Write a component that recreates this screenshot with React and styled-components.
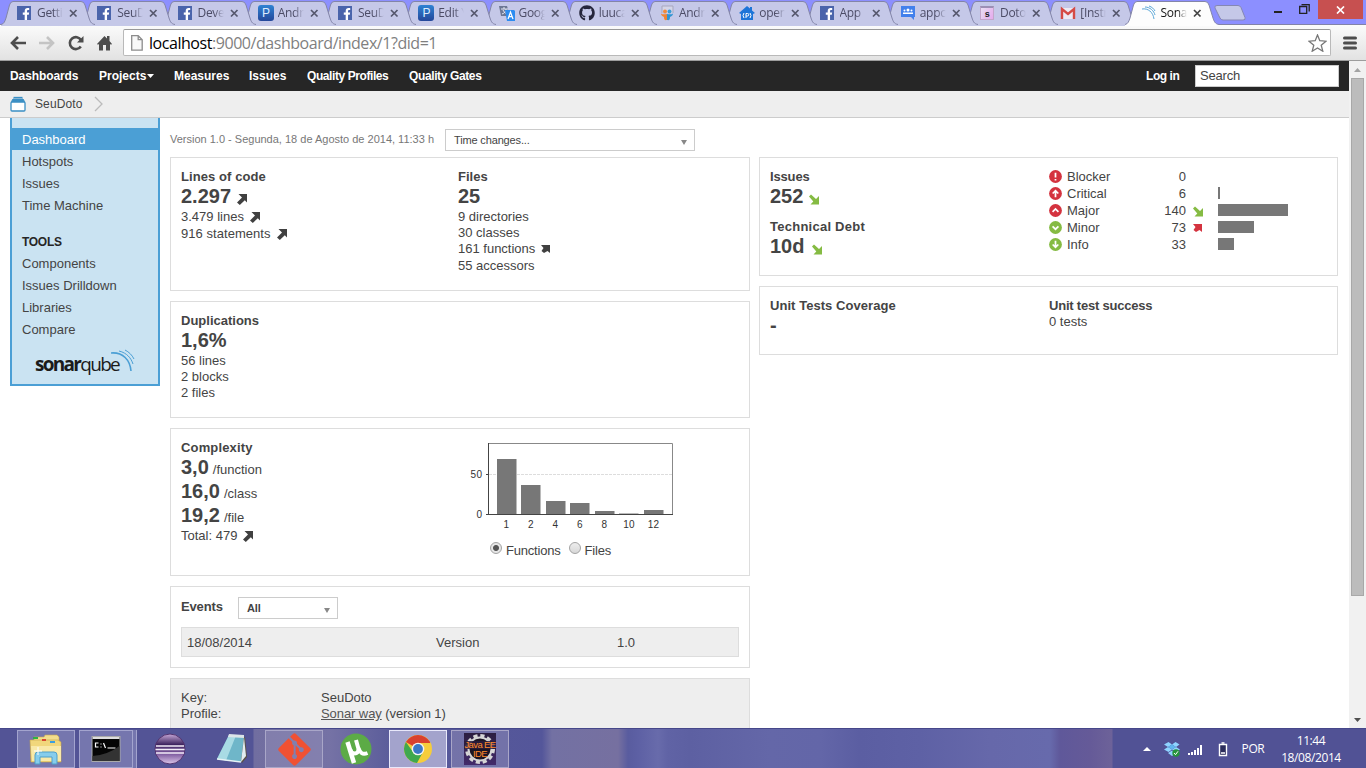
import React from "react";
import styled, { createGlobalStyle, css } from "styled-components";
import { FaFacebookF, FaGithub, FaGitAlt } from "react-icons/fa";

const Global = createGlobalStyle`
  *, *::before, *::after { box-sizing: border-box; }
  body { margin: 0; overflow: hidden; }
  body, input { font: 13px/16px "Liberation Sans", Arial, sans-serif; color: #444; }
  svg { display: block; flex: none; }
`;

const Desktop = styled.div`
  width: 1366px;
  height: 768px;
  display: flex;
  flex-direction: column;
  overflow: hidden;
  background: #fff;
`;

/* ---------- browser tabs ---------- */
const TabStrip = styled.div`
  height: 25px;
  flex: none;
  display: flex;
  background: #8c8fff;
  padding-left: 6px;
  isolation: isolate;
  border-bottom: 1px solid #8283a8;
`;
const TabItem = styled.div`
  width: 80.25px;
  height: 25px;
  flex: none;
  display: flex;
  align-items: center;
  position: relative;
  z-index: ${(p) => p.$z};
  padding: 1px 0 0 11px;
  font-family: "Open Sans", sans-serif;
  font-size: 12px;
  letter-spacing: -0.3px;
  color: ${(p) => (p.$active ? "#111" : "#4c4c66")};
`;
const TabShape = styled.svg`
  position: absolute;
  left: -5px;
  top: 0;
  z-index: -1;
`;
const TabTitle = styled.span`
  width: 27px;
  margin-left: 4px;
  overflow: hidden;
  white-space: nowrap;
  mask-image: linear-gradient(90deg, #000 60%, transparent 96%);
`;
const TabClose = styled.svg`
  margin-left: 5px;
`;
const NewTab = styled.svg`
  margin: 5px 0 0 4px;
`;
const WindowButtons = styled.div`
  margin-left: auto;
  display: flex;
  align-items: flex-start;
`;
const CloseButton = styled.div`
  width: 45px;
  height: 19px;
  margin-right: 3px;
  background: #c75050;
  display: grid;
  place-items: center;
`;

const FbIcon = styled.span`
  width: 14px;
  height: 14px;
  flex: none;
  margin-right: 2px;
  background: #4a64ab;
  color: #fff;
  display: flex;
  justify-content: flex-end;
  align-items: flex-end;
  svg { width: 10px; height: 12px; }
`;
const PIcon = styled.span`
  width: 16px;
  height: 16px;
  flex: none;
  border-radius: 3px;
  background: linear-gradient(#2f83d3, #24479a);
  color: #dcecff;
  display: grid;
  place-items: center;
  font: 12px/16px "Liberation Sans", Arial, sans-serif;
`;
const ShopIcon = styled.span`
  width: 14px;
  height: 14px;
  flex: none;
  margin-right: 2px;
  border: 1px solid #c3a6cb;
  border-top: 2px solid #9c8fb5;
  background: linear-gradient(120deg, #e9dff3, #e5a9ec);
  color: #222;
  display: grid;
  place-items: center;
  font: bold 9px/10px "Liberation Sans", Arial, sans-serif;
`;

const Favicon = ({ kind }) => {
  if (kind === "fb") return <FbIcon><FaFacebookF /></FbIcon>;
  if (kind === "p") return <PIcon>P</PIcon>;
  if (kind === "shop") return <ShopIcon>s</ShopIcon>;
  if (kind === "git") return <FaGithub size={16} color="#26263c" />;
  if (kind === "gmail")
    return (
      <svg width="16" height="16" viewBox="0 0 16 16">
        <rect x="1" y="3" width="14" height="11" fill="#eceaf3" />
        <path d="M2 14V4l6 5 6-5v10" fill="none" stroke="#d54b45" strokeWidth="2.4" />
      </svg>
    );
  if (kind === "translate")
    return (
      <svg width="16" height="16" viewBox="0 0 16 16">
        <path d="M0 1h8l3 10H2z" fill="#6d7794" />
        <path d="M2 4h7M5 2v2M3 9c3-1 4-3 4-5M4 5c1 2 2 3 4 4" stroke="#e6e9f5" fill="none" />
        <path d="M6 5h9l1 1v10H8z" fill="#2d8cf0" />
        <path d="M9 14l2.5-7 2.5 7M10 11.6h3" stroke="#fff" fill="none" strokeWidth="1.2" />
      </svg>
    );
  if (kind === "slide")
    return (
      <svg width="16" height="16" viewBox="0 0 16 16">
        <path d="M3 8V1h11v7" fill="#d4d5e8" stroke="#a7a7bd" />
        <circle cx="6" cy="6.5" r="2" fill="#f08a3c" />
        <circle cx="10.5" cy="6.5" r="2" fill="#3b9bd6" />
        <path d="M2 8.500c2 1.500 4 .500 6 .500v6c-2 .500-3 0-3-3C3 11 2 10 2 8.500z" fill="#ef8535" />
        <path d="M14 8.500c-2 1.500-4 .500-6 .500v6c2 .500 3 0 3-3 2-1 3-2 3-3.500z" fill="#2f94d2" />
      </svg>
    );
  if (kind === "open")
    return (
      <svg width="16" height="16" viewBox="0 0 16 16">
        <path d="M0 8l8-7 3 2.500V2h2v3.500L16 8l-2 1v6H2V9z" fill="#1d75d8" />
        <path d="M5 8l-1 2.500L5 13M11 8l1 2.500L11 13M7 13V8.500h1.500a1 1 0 010 2.500H7" stroke="#fff" fill="none" />
      </svg>
    );
  if (kind === "groups")
    return (
      <svg width="16" height="16" viewBox="0 0 16 16">
        <path d="M1 1h14v11h-1v3l-3-3H1z" fill="#4280ec" />
        <circle cx="8" cy="5" r="1.500" fill="#fff" />
        <circle cx="4.500" cy="5.500" r="1" fill="#fff" />
        <circle cx="11.500" cy="5.500" r="1" fill="#fff" />
        <path d="M3 9V7.500h10V9z" fill="#fff" />
      </svg>
    );
  return (
    <svg width="16" height="16" viewBox="0 0 16 16" fill="none" stroke="#5aa7d8">
      <path d="M1 4c6-1 11 3 12 10M4 2c5 0 9 4 10 8M8 1c3 1 5 3 6 5" />
    </svg>
  );
};

const tabs = [
  ["fb", "Getti"], ["fb", "SeuD"], ["fb", "Deve"], ["p", "Andr"], ["fb", "SeuD"],
  ["p", "Edit Y"], ["translate", "Goog"], ["git", "luuca"], ["slide", "Andr"],
  ["open", "open"], ["fb", "App"], ["groups", "appc"], ["shop", "Doto"],
  ["gmail", "[Instr"], ["sonar", "Sona"],
];

const Tab = ({ kind, title, active, z }) => (
  <TabItem $active={active} $z={z}>
    <TabShape width="95" height="26" viewBox="0 0 95 26">
      <path
        d="M0 24.500C3 24 4 21 5 18L8.500 5Q9.500 1.500 12 1.500H80Q83 1.500 84 5L88 18C89 21 90 24 94 24.500V26H0Z"
        fill={active ? "#fdfdfd" : "#c5c8e8"}
      />
      <path
        d="M0 24.500C3 24 4 21 5 18L8.500 5Q9.500 1.500 12 1.500H80Q83 1.500 84 5L88 18C89 21 90 24 94 24.500"
        fill="none"
        stroke="#8385a8"
      />
    </TabShape>
    <Favicon kind={kind} />
    <TabTitle>{title}</TabTitle>
    <TabClose width="9" height="9" viewBox="0 0 9 9">
      <path d="M1 1l6.500 6.500M7.500 1L1 7.500" stroke={active ? "#444" : "#55576c"} strokeWidth="1.700" />
    </TabClose>
  </TabItem>
);

/* ---------- browser toolbar ---------- */
const Toolbar = styled.div`
  height: 36px;
  flex: none;
  display: flex;
  align-items: center;
  padding: 0 9px;
  background: linear-gradient(#fbfbfb, #e2e2e2);
  border-bottom: 1px solid #9d9d9d;
`;
const AddressBar = styled.div`
  width: 1208px;
  height: 27px;
  margin: 0 12px 0 11px;
  padding: 0 3px 0 7px;
  display: flex;
  align-items: center;
  background: #fff;
  border: 1px solid #b9b9b9;
  border-top-color: #989898;
  border-radius: 2px;
`;
const Url = styled.div`
  margin: 0 auto 0 6px;
  font: 16px/22px "Open Sans", sans-serif;
  letter-spacing: -0.45px;
  color: #7f7f7f;
  b { font-weight: 400; color: #000; }
`;
const NavButtons = styled.div`
  display: flex;
  align-items: center;
  padding-left: 1px;
  gap: 13px;
`;

/* ---------- page ---------- */
const Viewport = styled.div`
  height: 667px;
  flex: none;
  display: flex;
  overflow: hidden;
`;
const Page = styled.div`
  width: 1349px;
  flex: none;
`;
const NavBar = styled.nav`
  height: 30px;
  display: flex;
  align-items: center;
  padding: 0 10px;
  background: #262626;
  color: #fff;
  font-size: 12px;
  font-weight: 700;
`;
const NavLink = styled.span`
  display: flex;
  align-items: center;
  gap: 1px;
  width: ${(p) => p.$w}px;
  letter-spacing: ${(p) => p.$ls || 0}px;
  white-space: nowrap;
`;
const SearchBox = styled.div`
  width: 144px;
  height: 22px;
  padding: 2px 4px;
  border: 1px solid #ccc;
  background: #fff;
  color: #444;
  font-size: 13px;
  font-weight: 400;
  letter-spacing: -0.2px;
`;
const Breadcrumb = styled.div`
  height: 27px;
  display: flex;
  align-items: center;
  padding-left: 10px;
  background: #eee;
  border-bottom: 1px solid #ccc;
  span { margin: 0 11px 1px 9px; width: 48px; font-size: 12px; letter-spacing: 0.1px; }
`;
const Body = styled.div`
  display: flex;
  align-items: flex-start;
  padding: 0 11px 0 10px;
`;
const Sidebar = styled.aside`
  width: 150px;
  height: 268px;
  padding-top: 10px;
  flex: none;
  background: #cae3f2;
  border: 2px solid #4b9fd5;
  border-top: 0;
`;
const SideItem = styled.div`
  height: 22px;
  padding: 0 10px;
  line-height: ${(p) => (p.$low ? 24 : 22)}px;
  ${(p) => p.$active && css`background: #4b9fd5; color: #fff;`}
`;
const SideTitle = styled.div`
  margin-top: 14px;
  height: 23px;
  padding: 0 10px;
  font: bold 12px/24px "Liberation Sans", Arial, sans-serif;
  letter-spacing: -0.3px;
  color: #262626;
`;
const Logo = styled.div`
  display: flex;
  align-items: flex-start;
  padding: 8px 0 0 23px;
  span {
    margin-top: 5px;
    font: 19px/20px "Open Sans", sans-serif;
    letter-spacing: -1.7px;
    color: #1b1b1b;
  }
  svg { margin-left: -8px; }
`;
const Main = styled.main`
  flex: 1;
  margin-left: 10px;
`;
const VersionRow = styled.div`
  height: 39px;
  padding-top: 11px;
  display: flex;
  color: #777;
  font-size: 11px;
  > span { width: 275px; line-height: 20px; white-space: nowrap; }
`;
const Select = styled.div`
  width: ${(p) => p.$w}px;
  height: 22px;
  padding: 0 7px 0 8px;
  display: flex;
  align-items: center;
  justify-content: space-between;
  border: 1px solid #ccc;
  background: #fff;
  color: #444;
  font-size: 11px;
  letter-spacing: -0.15px;
  font-weight: ${(p) => (p.$bold ? 700 : 400)};
  svg { margin-top: 4px; }
`;
const Columns = styled.div`
  display: flex;
  gap: 9px;
`;
const Column = styled.div`
  width: ${(p) => p.$w}px;
  display: flex;
  flex-direction: column;
  gap: 10px;
`;
const Card = styled.section`
  height: ${(p) => p.$h}px;
  padding: 10px;
  border: 1px solid #ddd;
  background: ${(p) => (p.$grey ? "#eee" : "#fff")};
  display: ${(p) => (p.$stack ? "block" : "flex")};
`;
const Cell = styled.div`
  width: ${(p) => p.$w}px;
  flex: none;
`;
const Title = styled.div`
  height: 16px;
  font-weight: 700;
  line-height: 18px;
  letter-spacing: ${(p) => p.$ls || 0}px;
  margin-top: ${(p) => p.$mt || 0}px;
`;
const Value = styled.div`
  height: 24px;
  display: flex;
  align-items: baseline;
  gap: ${(p) => p.$gap || 5}px;
  line-height: 24px;
  b { font-size: 20px; }
  svg { align-self: center; margin-top: 5px; }
`;
const Line = styled.div`
  height: ${(p) => (p.$tall ? 17 : 16)}px;
  padding-top: ${(p) => (p.$tall ? 0 : 2)}px;
  display: flex;
  align-items: center;
  gap: ${(p) => p.$gap || 5}px;
  letter-spacing: ${(p) => p.$ls || 0}px;
`;

const ARROWS = {
  up2: "M2.500 1H11V9.500L8.800 7.300 3.800 12 1 9.600 6 4.500z",
  up1: "M1 2h9v8L7.500 8 4 10 1.500 8 3.500 5z",
  down: "M11 3v8.500H2.500L5.300 8.600 1 3.500 3 1.500 8 6z",
};
const Arrow = ({ kind = "up2", color = "#404040" }) => (
  <svg width="12" height="12" viewBox="0 0 12 12"><path d={ARROWS[kind]} fill={color} /></svg>
);
const Caret = () => (
  <svg width="6" height="5" viewBox="0 0 6 5"><path d="M0 0h6L3 5z" fill="#888" /></svg>
);

const SeverityRow = styled.div`
  height: 17px;
  display: flex;
  align-items: center;
`;
const SeverityName = styled.span`
  width: 75px;
  margin-left: 5px;
`;
const SeverityCount = styled.span`
  width: 44px;
  text-align: right;
`;
const Trend = styled.span`
  width: 32px;
  padding-left: 6px;
`;
const Bar = styled.span`
  height: 12px;
  margin-bottom: 2px;
  background: #777;
`;
const severityGlyph = {
  Blocker: "M6 2.500v4.500M6 8.200v1.500",
  Critical: "M6 9.500V3.500M3.400 6L6 3.400 8.600 6",
  Major: "M3.300 7.200L6 4.600l2.700 2.600",
  Minor: "M3.300 5L6 7.600 8.700 5",
  Info: "M6 2.500v6M3.400 6L6 8.600 8.600 6",
};
const severities = [
  ["Blocker", "0", "#d4333f", null, 0],
  ["Critical", "6", "#d4333f", null, 2],
  ["Major", "140", "#d4333f", ["down", "#85bb43"], 70],
  ["Minor", "73", "#85bb43", ["up1", "#d4333f"], 36],
  ["Info", "33", "#85bb43", null, 16],
];

const ChartCell = styled.div`
  padding: 4px 0 0 10px;
`;
const Radios = styled.div`
  display: flex;
  align-items: flex-start;
  height: 18px;
  margin: 7px 0 0 22px;
  letter-spacing: -0.2px;
  span { margin: 1px 8px 0 4px; }
`;
const Radio = styled.i`
  width: 12px;
  height: 12px;
  flex: none;
  border: 1px solid #a3a3a3;
  border-radius: 50%;
  background: ${(p) => (p.$on ? "radial-gradient(circle, #555 0 2.5px, #e6e6e6 3.500px)" : "linear-gradient(#ededed, #d8d8d8)")};
`;
const chartBars = [[29, 55], [53, 29], [78, 13], [102, 11], [127, 3], [151, 0.5], [176, 4]];

const EventsHead = styled.div`
  display: flex;
  height: 22px;
  > b { width: 57px; line-height: 20px; letter-spacing: -0.15px; }
`;
const EventRow = styled.div`
  margin-top: 8px;
  height: 30px;
  padding: 2px 0 0 5px;
  display: flex;
  align-items: center;
  border: 1px solid #ddd;
  background: #eee;
`;
const KeyRow = styled.div`
  display: flex;
  height: 16px;
  line-height: 18px;
  > span { width: 140px; }
  > div { letter-spacing: ${(p) => p.$ls || 0}px; }
  u { color: #555; }
`;

/* ---------- scrollbar ---------- */
const Scrollbar = styled.div`
  width: 17px;
  display: flex;
  flex-direction: column;
  align-items: center;
  background: #f1f1f1;
`;
const ScrollButton = styled.div`
  width: 17px;
  height: 17px;
  display: grid;
  place-items: center;
`;
const Thumb = styled.div`
  width: 13px;
  height: 518px;
  margin-bottom: auto;
  border: 1px solid #a8a8a8;
  background: #bcbcbc;
`;

/* ---------- taskbar ---------- */
const Taskbar = styled.footer`
  height: 40px;
  flex: none;
  display: flex;
  align-items: center;
  border-top: 1px solid #46478a;
  color: #fff;
  padding-left: 17px;
  background:
    linear-gradient(90deg, #535496 0 253px, #716ea0 254px, #7572a5 330px, #575999 400px, #54569a 542px,
      #7371a3 552px, #7670a0 618px, #595c9f 628px, #5d60a4 638px, #686bab 658px, #6063a5 668px, #5d60a2 690px,
      #6467a8 770px, #6366a8 820px, #5b5ea2 860px, #5e61a5 920px, #6668aa 990px, #676aac 1050px, #5f589a 1060px,
      #655a98 1090px, #6d6299 1112px, #515295 1113px);
`;
const Task = styled.div`
  width: ${(p) => (p.$stacked ? 54 : 58)}px;
  height: 38px;
  margin-right: ${(p) => (p.$stacked ? 8 : 4)}px;
  display: grid;
  place-items: center;
  flex: none;
  border: 1px solid transparent;
  ${(p) => p.$state === "open" && css`border-color: #a3a4ce; background: #7576ae;`}
  ${(p) => p.$state === "faded" && css`border-color: #a9a6c8; background: rgba(145, 141, 184, 0.5);`}
  ${(p) => p.$state === "active" && css`border-color: #e8e8fa; background: #a3a3cc;`}
  ${(p) => p.$stacked && css`box-shadow: 3px 0 0 #7576ae, 4px 0 0 #a3a4ce;`}
`;
const Tray = styled.div`
  margin: 0 21px 0 auto;
  display: flex;
  align-items: center;
  font: 12px/17px "Open Sans", sans-serif;
`;
const TrayText = styled.div`
  width: ${(p) => p.$w}px;
  text-align: center;
  letter-spacing: -0.4px;
`;
const IdeIcon = styled.div`
  width: 32px;
  height: 32px;
  position: relative;
  background: linear-gradient(#2b1e3f, #432b6b);
  span {
    position: absolute;
    inset: 7px 0 0 0;
    width: 32px;
    text-align: center;
    font: 9.5px/9px "Liberation Sans", Arial, sans-serif;
    letter-spacing: -0.6px;
    color: #ff8a2b;
    white-space: nowrap;
  }
`;

const ExplorerIcon = () => (
  <svg width="34" height="32" viewBox="0 0 34 32">
    <path d="M5 4h10l1-2h12l2 2v6H5z" fill="#f3dd8c" stroke="#c9a850" strokeWidth=".6" />
    <path d="M1 7h28l3 2v20H2z" fill="#f1d77c" stroke="#c6a448" strokeWidth=".6" />
    <path d="M2 13h30v15H3z" fill="#f9e9a8" />
    <path d="M4 4h5v2H4z" fill="#2eb341" /><path d="M13 6h4v2h-4z" fill="#d9482f" /><path d="M21 8h5v2h-5z" fill="#3c9fe0" />
    <path d="M6 31V22q0-3 3-3h16q3 0 3 3v9h-5v-7H11v7z" fill="#86cdec" stroke="#4f9fc9" />
    <path d="M9 14v8M5 18h8" stroke="#fff" />
  </svg>
);
const ConsoleIcon = () => (
  <svg width="30" height="26" viewBox="0 0 29 26">
    <rect x=".5" y=".5" width="28" height="25" fill="#050505" stroke="#aaa" />
    <path d="M1 1h27v2H1z" fill="#ddd" />
    <path d="M7 7H4v4h3M9 8h1M9 11h1M12 7l2 5M16 12h8" fill="none" stroke="#fff" strokeWidth="1.200" />
    <path d="M1 20Q16 19 28 10V25H1z" fill="#333" />
  </svg>
);
const EclipseIcon = () => (
  <svg width="32" height="32" viewBox="0 0 32 32">
    <defs>
      <linearGradient id="ecl" x1="0" y1="0" x2="0" y2="1">
        <stop offset="0" stopColor="#c7a9d8" /><stop offset=".35" stopColor="#3f2560" /><stop offset=".65" stopColor="#7b589d" /><stop offset="1" stopColor="#dcc6e9" />
      </linearGradient>
    </defs>
    <circle cx="16" cy="16" r="15" fill="url(#ecl)" stroke="#52346f" />
    <path d="M2 13h28M1.500 16.500h29M2 20h28" stroke="#f2ecf8" strokeWidth="1.300" />
  </svg>
);
const NotepadIcon = () => (
  <svg width="32" height="32" viewBox="0 0 32 32">
    <path d="M14 3l15 1 2 20-5 6z" fill="#5a5145" />
    <path d="M13 2l15 1-3 26-24-3z" fill="#6fb6c9" />
    <path d="M13 2l7 .500-10 25L1 26z" fill="#a9dbe4" />
    <path d="M13 1l15 1v3L12 4z" fill="#dce5e8" />
    <path d="M28 4l2 19-5 6z" fill="#e2ecf0" />
    <path d="M1 26l24 3" stroke="#e6f2f5" strokeWidth="1.500" />
  </svg>
);
const TorrentIcon = () => (
  <svg width="32" height="32" viewBox="0 0 32 32">
    <circle cx="16" cy="16" r="15.500" fill="#5cab46" />
    <path d="M7.500 9l6.500 21" fill="none" stroke="#fff" strokeWidth="4.500" />
    <path d="M10 16c1.500 6 8.500 6 8.500 0L16 7M18.500 15c1.500 5 4 7 9 5" fill="none" stroke="#fff" strokeWidth="4" />
  </svg>
);
const ChromeIcon = () => (
  <svg width="30" height="30" viewBox="0 0 30 30">
    <circle cx="15" cy="15" r="14" fill="#f6cd3b" />
    <path d="M15 15L2.900 8A14 14 0 0127.100 8L27 9H15z" fill="#d9412e" />
    <path d="M2.900 8A14 14 0 0014 29l6-11-10 0z" fill="#3fa84e" />
    <circle cx="15" cy="15" r="6.300" fill="#f4f4f4" />
    <circle cx="15" cy="15" r="4.900" fill="#3b78c6" />
  </svg>
);
const DropboxTray = () => (
  <svg width="16" height="16" viewBox="0 0 16 16">
    <path d="M4.500 1L8 3.500 4 6 0 3.500zM11.500 1L15.500 3.500 12 6 8 3.500zM4 6l4 2.500L4.500 11 0 8.500zM12 6l4 2.500-4.500 2.500L8 8.500zM4 12l4-2.500L12 12l-4 3z" fill="#8ed3ff" />
    <path d="M4 6l4-2.500L12 6 8 8.500z" fill="#5fb5ee" />
    <circle cx="12" cy="12" r="3.700" fill="#26933c" />
    <path d="M10 12l1.500 1.700L14 10.300" fill="none" stroke="#fff" />
  </svg>
);

export default function App() {
  return (
    <Desktop>
      <Global />
      <TabStrip>
        {tabs.map(([kind, title], i) => (
          <Tab key={i} kind={kind} title={title} active={i === 14} z={i === 14 ? 30 : 20 - i} />
        ))}
        <NewTab width="32" height="16" viewBox="0 0 32 16">
          <path d="M3 .500h21q2 0 3 2l4 10q1 2.500-2 2.500H9q-2 0-3-2L1 3Q0 .500 3 .500z" fill="#c5c8e8" stroke="#8587b3" />
        </NewTab>
        <WindowButtons>
          <svg width="46" height="19" viewBox="0 0 46 19">
            <path d="M2 12h8" stroke="#222" strokeWidth="2" />
            <path d="M27.700 6.500h7v6.800h-7zM29.500 4.600h7.700v7" fill="none" stroke="#222" strokeWidth="1.300" />
          </svg>
          <CloseButton>
            <svg width="9" height="8" viewBox="0 0 9 8"><path d="M1 .500l7 7M8 .500l-7 7" stroke="#fff" strokeWidth="1.700" /></svg>
          </CloseButton>
        </WindowButtons>
      </TabStrip>

      <Toolbar>
        <NavButtons>
          <svg width="16" height="14" viewBox="0 0 16 14"><path d="M8 1L2 7l6 6M2 7h14" fill="none" stroke="#4d4d4d" strokeWidth="2.600" /></svg>
          <svg width="16" height="14" viewBox="0 0 16 14"><path d="M8 1l6 6-6 6M14 7H0" fill="none" stroke="#c4c4c4" strokeWidth="2.600" /></svg>
          <svg width="16" height="16" viewBox="0 0 16 16">
            <path d="M12.800 11.500A6 6 0 1113 5" fill="none" stroke="#4d4d4d" strokeWidth="2.600" />
            <path d="M15.500 1v6.500H9z" fill="#4d4d4d" />
          </svg>
          <svg width="15" height="16" viewBox="0 0 15 16">
            <path d="M0 9L7.500 1l2.500 2.500V1h2.500v5L15 9l-1 .800-1-.800v6.500H9V10H6v5.500H2V9l-1 .800z" fill="#4d4d4d" />
          </svg>
        </NavButtons>
        <AddressBar>
          <svg width="12" height="16" viewBox="0 0 12 16">
            <path d="M.700.700h6.500l4 4v10.500H.700zM7.200.700v4h4" fill="#f8f8f8" stroke="#8c8c8c" strokeWidth="1.300" />
          </svg>
          <Url><b>localhost</b>:9000/dashboard/index/1?did=1</Url>
          <svg width="19" height="18" viewBox="0 0 19 18">
            <path d="M9.500 1l2.300 5.700 6.200.500-4.800 4 1.600 6-5.300-3.300-5.300 3.300 1.600-6L1 7.200l6.200-.500z" fill="none" stroke="#777" strokeWidth="1.300" />
          </svg>
        </AddressBar>
        <svg width="14" height="14" viewBox="0 0 14 14"><path d="M1.500 2h11M1.500 7h11M1.500 12h11" stroke="#4d4d4d" strokeWidth="3" strokeLinecap="round" /></svg>
      </Toolbar>

      <Viewport>
        <Page>
          <NavBar>
            <NavLink $w={89} $ls={-0.1}>Dashboards</NavLink>
            <NavLink $w={75}>Projects<svg width="7" height="4" viewBox="0 0 7 4"><path d="M0 0h7L3.500 4z" fill="#fff" /></svg></NavLink>
            <NavLink $w={75}>Measures</NavLink>
            <NavLink $w={58}>Issues</NavLink>
            <NavLink $w={102} $ls={-0.42}>Quality Profiles</NavLink>
            <NavLink $w={737} $ls={-0.38}>Quality Gates</NavLink>
            <NavLink $w={49} $ls={-0.45}>Log in</NavLink>
            <SearchBox>Search</SearchBox>
          </NavBar>
          <Breadcrumb>
            <svg width="16" height="16" viewBox="0 0 16 16" fill="none" stroke="#3a8fc4">
              <rect x="1" y="6" width="14" height="9" rx="1" fill="#fff" strokeWidth="1.300" />
              <path d="M1.500 5.500L3 3h10l1.500 2.500z" fill="#3a8fc4" /><path d="M3.500 1.500h9" strokeWidth="1.300" />
            </svg>
            <span>SeuDoto</span>
            <svg width="9" height="16" viewBox="0 0 9 16"><path d="M1 1l7 7-7 7" fill="none" stroke="#bbb" strokeWidth="1.300" /></svg>
          </Breadcrumb>
          <Body>
            <Sidebar>
              <SideItem $low $active>Dashboard</SideItem>
              <SideItem $low>Hotspots</SideItem>
              <SideItem $low>Issues</SideItem>
              <SideItem $low>Time Machine</SideItem>
              <SideTitle>TOOLS</SideTitle>
              <SideItem>Components</SideItem>
              <SideItem>Issues Drilldown</SideItem>
              <SideItem>Libraries</SideItem>
              <SideItem>Compare</SideItem>
              <Logo>
                <span><b>sonar</b>qube</span>
                <svg width="24" height="24" viewBox="0 0 24 24" fill="none" stroke="#4b9fd5">
                  <path d="M0 4c12-1 19 7 20 18" strokeWidth="1.600" /><path d="M8 2c8 2 12 7 14 13M14 1c4 2 7 5 9 9" />
                </svg>
              </Logo>
            </Sidebar>
            <Main>
              <VersionRow>
                <span>Version 1.0 - Segunda, 18 de Agosto de 2014, 11:33 h</span>
                <Select $w={250}>Time changes...<Caret /></Select>
              </VersionRow>
              <Columns>
                <Column $w={580}>
                  <Card $h={134}>
                    <Cell $w={277}>
                      <Title $ls={0.08}>Lines of code</Title>
                      <Value><b>2.297</b><Arrow /></Value>
                      <Line $tall>3.479 lines<Arrow /></Line>
                      <Line $tall $ls={0.05}>916 statements<Arrow /></Line>
                    </Cell>
                    <Cell>
                      <Title>Files</Title>
                      <Value><b>25</b></Value>
                      <Line>9 directories</Line>
                      <Line>30 classes</Line>
                      <Line $tall>161 functions<Arrow kind="up1" /></Line>
                      <Line>55 accessors</Line>
                    </Cell>
                  </Card>
                  <Card $h={117}>
                    <Cell>
                      <Title>Duplications</Title>
                      <Value><b>1,6%</b></Value>
                      <Line>56 lines</Line>
                      <Line>2 blocks</Line>
                      <Line>2 files</Line>
                    </Cell>
                  </Card>
                  <Card $h={148}>
                    <Cell $w={277}>
                      <Title $ls={0.15}>Complexity</Title>
                      <Value $gap={4}><b>3,0</b>/function</Value>
                      <Value $gap={4}><b>16,0</b>/class</Value>
                      <Value $gap={4}><b>19,2</b>/file</Value>
                      <Line>Total: 479<Arrow /></Line>
                    </Cell>
                    <ChartCell>
                      <svg width="210" height="92" viewBox="0 0 210 92" fontFamily="Liberation Sans, Arial, sans-serif" fontSize="10" fill="#333">
                        <path d="M21 31.500h184" stroke="#ddd" strokeDasharray="3 1" />
                        <path d="M20.500.500h184v71" fill="none" stroke="#888" />
                        {chartBars.map(([x, h]) => <rect key={x} x={x} y={71 - h} width="19.500" height={h} fill="#777" />)}
                        <path d="M20.500 0v71.500H205M18 31.500h3M18 71.500h3" fill="none" stroke="#444" />
                        <text x="14.500" y="35" textAnchor="end" letterSpacing=".5">50</text>
                        <text x="14.500" y="75" textAnchor="end" letterSpacing=".5">0</text>
                        {["1", "2", "4", "6", "8", "10", "12"].map((t, i) => (
                          <text key={t} x={38.500 + i * 24.500} y="85" textAnchor="middle" letterSpacing=".3">{t}</text>
                        ))}
                      </svg>
                      <Radios>
                        <Radio $on /><span>Functions</span>
                        <Radio /><span>Files</span>
                      </Radios>
                    </ChartCell>
                  </Card>
                  <Card $h={82} $stack>
                    <EventsHead><b>Events</b><Select $w={100} $bold>All<Caret /></Select></EventsHead>
                    <EventRow>
                      <Cell $w={249}>18/08/2014</Cell>
                      <Cell $w={181}>Version</Cell>
                      <Cell>1.0</Cell>
                    </EventRow>
                  </Card>
                  <Card $h={90} $grey $stack>
                    <KeyRow><span>Key:</span>SeuDoto</KeyRow>
                    <KeyRow $ls={-0.08}><span>Profile:</span><div><u>Sonar way</u> (version 1)</div></KeyRow>
                  </Card>
                </Column>
                <Column $w={579}>
                  <Card $h={119}>
                    <Cell $w={279}>
                      <Title $ls={-0.15}>Issues</Title>
                      <Value><b>252</b><Arrow kind="down" color="#85bb43" /></Value>
                      <Title $mt={10} $ls={0.25}>Technical Debt</Title>
                      <Value $gap={7}><b>10d</b><Arrow kind="down" color="#85bb43" /></Value>
                    </Cell>
                    <Cell>
                      {severities.map(([name, count, color, trend, w]) => (
                        <SeverityRow key={name}>
                          <svg width="13" height="13" viewBox="0 0 12 12">
                            <circle cx="6" cy="6" r="5.900" fill={color} />
                            <path d={severityGlyph[name]} fill="none" stroke="#fff" strokeWidth="1.600" />
                          </svg>
                          <SeverityName>{name}</SeverityName>
                          <SeverityCount>{count}</SeverityCount>
                          <Trend>{trend && <Arrow kind={trend[0]} color={trend[1]} />}</Trend>
                          <Bar style={{ width: w }} />
                        </SeverityRow>
                      ))}
                    </Cell>
                  </Card>
                  <Card $h={69}>
                    <Cell $w={279}>
                      <Title $ls={0.05}>Unit Tests Coverage</Title>
                      <Value><b>-</b></Value>
                    </Cell>
                    <Cell>
                      <Title $ls={-0.22}>Unit test success</Title>
                      <Line>0 tests</Line>
                    </Cell>
                  </Card>
                </Column>
              </Columns>
            </Main>
          </Body>
        </Page>
        <Scrollbar>
          <ScrollButton><svg width="7" height="4" viewBox="0 0 7 4"><path d="M0 4h7L3.500 0z" fill="#a3a3a3" /></svg></ScrollButton>
          <Thumb />
          <ScrollButton><svg width="7" height="4" viewBox="0 0 7 4"><path d="M0 0h7L3.500 4z" fill="#505050" /></svg></ScrollButton>
        </Scrollbar>
      </Viewport>

      <Taskbar>
        <Task $state="open"><ExplorerIcon /></Task>
        <Task $state="open" $stacked><ConsoleIcon /></Task>
        <Task><EclipseIcon /></Task>
        <Task><NotepadIcon /></Task>
        <Task $state="faded"><FaGitAlt size={37} color="#f05133" /></Task>
        <Task><TorrentIcon /></Task>
        <Task $state="active"><ChromeIcon /></Task>
        <Task $state="faded">
          <IdeIcon>
            <svg width="32" height="32" viewBox="0 0 32 32">
              <circle cx="16" cy="16" r="13.500" fill="none" stroke="#d6d6d6" strokeWidth="3" strokeDasharray="4.200 2.860" />
              <circle cx="16" cy="16" r="11.500" fill="#1c1524" stroke="#d6d6d6" strokeWidth="2" />
              <path d="M0 8h32v8H0z" fill="#2a1c3c" opacity=".85" />
            </svg>
            <span>Java EE<br />IDE</span>
          </IdeIcon>
        </Task>
        <Tray>
          <svg width="86" height="20" viewBox="0 0 86 20">
            <path d="M0 12h8L4 8z" fill="#fff" />
            <g transform="translate(21 2)"><DropboxTray /></g>
            <path d="M46 16v-2M49 16v-3M52 16v-5M55 16V9M58 16V6" stroke="#fff" strokeWidth="2" />
            <path d="M76.500 5.500h7v11h-7z" fill="#2c2d5c" stroke="#fff" strokeWidth="1.400" />
            <path d="M78.500 4h3M78 14h4" stroke="#fff" strokeWidth="1.600" />
          </svg>
          <TrayText $w={48}>POR</TrayText>
          <TrayText $w={68}>11:44<br />18/08/2014</TrayText>
        </Tray>
      </Taskbar>
    </Desktop>
  );
}
